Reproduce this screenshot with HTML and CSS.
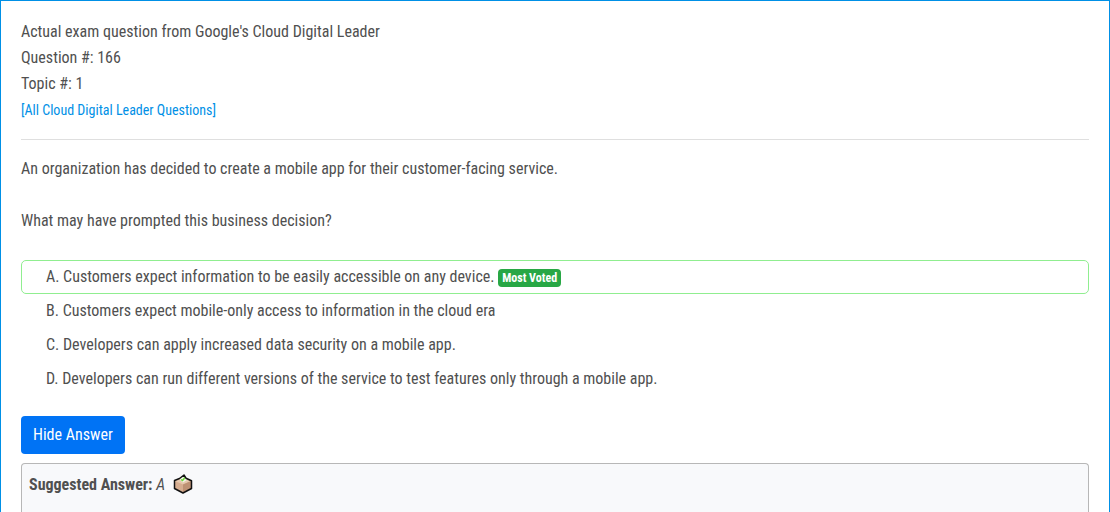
FILE: index.html
```html
<!DOCTYPE html>
<html lang="en">
<head>
<meta charset="utf-8">
<meta name="viewport" content="width=device-width, initial-scale=1">
<title>Cloud Digital Leader</title>
<link rel="stylesheet" href="styles.css">
</head>
<body>
<main class="card">
  <header class="intro">
    <div>Actual exam question from Google's Cloud Digital Leader</div>
    <div>Question #: 166</div>
    <div>Topic #: 1</div>
    <a class="all-link" href="#">[All Cloud Digital Leader Questions]</a>
  </header>
  <section class="question">
    <p class="question-text">An organization has decided to create a mobile app for their customer-facing service.</p>
    <p class="question-text">What may have prompted this business decision?</p>
  </section>
  <ul class="choices">
    <li class="choice choice-voted">A. Customers expect information to be easily accessible on any device. <span class="badge">Most Voted</span></li>
    <li class="choice">B. Customers expect mobile-only access to information in the cloud era</li>
    <li class="choice">C. Developers can apply increased data security on a mobile app.</li>
    <li class="choice">D. Developers can run different versions of the service to test features only through a mobile app.</li>
  </ul>
  <button class="reveal" type="button">Hide Answer</button>
  <section class="answer">
    <div class="answer-line">
      <span><strong>Suggested Answer:</strong> <em>A</em></span>
      <svg class="ballot" viewBox="0 0 20 20" role="img" aria-label="Votes">
        <path d="M2 7 L10 3 L18 7 V14.500 L10 18.500 L2 14.500Z" fill="#d6ad90"/>
        <path d="M2 7 L10 3 L18 7 L10 10.500Z" fill="#e6c8ae"/>
        <path d="M10 10.500 L18 7 V14.500 L10 18.500Z" fill="#bd9174"/>
        <path d="M6.500 5.500 L11 1.500 L14 6 L10 8.500Z" fill="#f1f6e8"/>
        <path d="M8 5.500 L9.500 6.500 L12 3.500" fill="none" stroke="#6fd63a" stroke-width="1.500"/>
        <path d="M1.500 6.500 L6.500 4.500 L11 1 L13 4.200 L18.500 6.800 V14.500 L10 19 L1.500 14.500Z" fill="none" stroke="#111" stroke-width="1.500" stroke-linejoin="round"/>
      </svg>
    </div>
  </section>
</main>
</body>
</html>
```
FILE: styles.css
```css
* {
  box-sizing: border-box;
}

body {
  margin: 0;
  background: #fff;
  color: #505050;
  font: 16px/26px "Roboto Condensed", Roboto, sans-serif;
}

.card {
  display: flex;
  flex-direction: column;
  min-height: 100vh;
  padding: 18px 20px 0;
  border: 1px solid #0090e6;
  border-bottom: 0;
}

.intro {
  padding-bottom: 16px;
  border-bottom: 1px solid #dfdfdf;
}

.all-link {
  display: block;
  width: fit-content;
  color: #0090e6;
  font-size: 14px;
  text-decoration: none;
}

.question {
  display: grid;
  gap: 26px;
  padding: 16px 0 26px;
}

.question-text {
  margin: 0;
}

.choices {
  margin: 0 0 20px;
  padding: 0;
  list-style: none;
}

.choice {
  padding: 3px 24px;
  border: 1px solid transparent;
  border-radius: 5px;
}

.choice-voted {
  border-color: #90ee90;
}

.badge {
  display: inline-block;
  padding: 3px 4px;
  border-radius: 4px;
  background: #28a745;
  color: #fff;
  font-size: 12px;
  font-weight: 700;
  line-height: 12px;
}

.reveal {
  align-self: flex-start;
  margin-bottom: 9px;
  padding: 6px 12px;
  border: 0;
  border-radius: 4px;
  background: #0073f5;
  color: #fff;
  font: inherit;
  cursor: pointer;
}

.answer {
  flex: 1;
  padding: 8px 7px;
  border: 1px solid #b7b7b7;
  border-bottom: 0;
  border-radius: 4px 4px 0 0;
  background: #f8f9fb;
}

.answer-line {
  display: flex;
  align-items: center;
  gap: 8px;
}

.ballot {
  width: 20px;
  height: 20px;
  margin-bottom: 2px;
}
```
